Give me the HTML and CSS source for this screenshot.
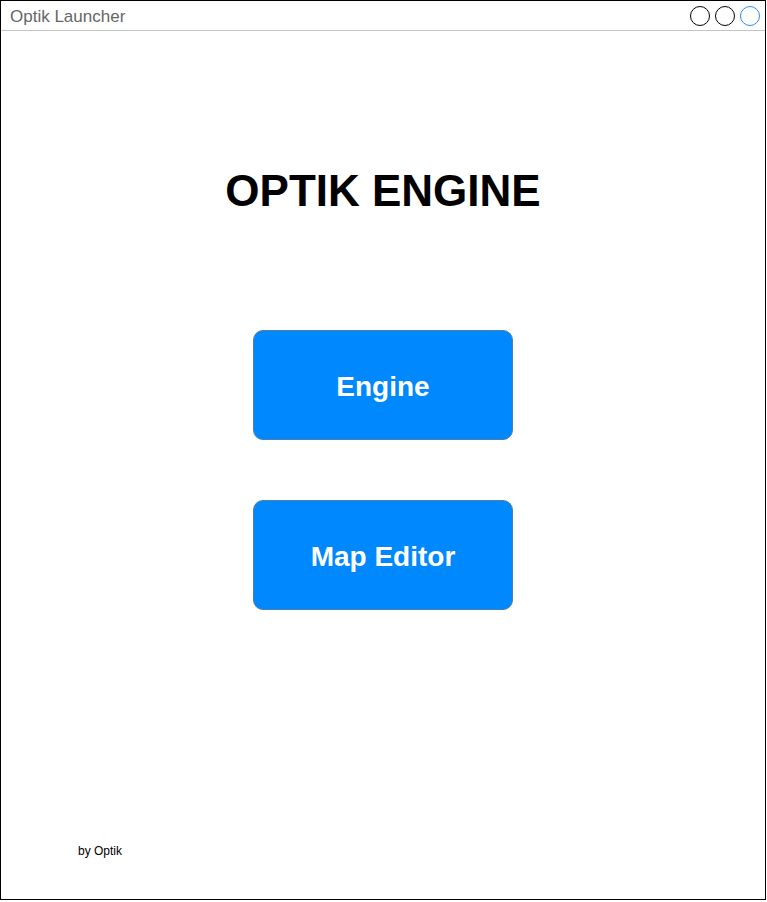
FILE: index.html
```
<!DOCTYPE html>
<html>
<head>
<meta charset="utf-8">
<title>Optik Launcher</title>
<link rel="stylesheet" href="styles.css">
</head>
<body>
<div class="window">
  <div class="titlebar">
    <span class="title">Optik Launcher</span>
    <div class="controls">
      <span class="dot"></span>
      <span class="dot"></span>
      <span class="dot dot-blue"></span>
    </div>
  </div>
  <main class="content">
    <h1 class="heading">OPTIK ENGINE</h1>
    <div class="buttons">
      <button class="launch">Engine</button>
      <button class="launch">Map Editor</button>
    </div>
  </main>
  <footer class="footer">by Optik</footer>
</div>
</body>
</html>
```
FILE: styles.css
```
html, body {
  margin: 0;
  padding: 0;
  background: #ffffff;
}

body {
  font-family: "Liberation Sans", Arial, sans-serif;
}

.window {
  box-sizing: border-box;
  width: 766px;
  height: 900px;
  border: 1px solid #000000;
  display: flex;
  flex-direction: column;
}

.titlebar {
  height: 29px;
  border-bottom: 1px solid #c4c4c4;
  display: flex;
  align-items: center;
  justify-content: space-between;
  padding: 0 5px 0 9px;
}

.title {
  font-size: 17px;
  line-height: 29px;
  color: #666666;
  padding-top: 1px;
}

.controls {
  display: flex;
  gap: 5px;
  padding-top: 1px;
}

.dot {
  box-sizing: border-box;
  width: 20px;
  height: 20px;
  border: 1px solid #000000;
  border-radius: 50%;
}

.dot-blue {
  border-color: #2f8fe8;
}

.content {
  flex: 1;
  display: flex;
  flex-direction: column;
  align-items: center;
}

.heading {
  margin: 135px 0 0 0;
  font-size: 44px;
  line-height: 50px;
  font-weight: bold;
  color: #000000;
}

.buttons {
  margin-top: 114px;
  display: flex;
  flex-direction: column;
  gap: 60px;
}

.launch {
  box-sizing: border-box;
  width: 260px;
  height: 110px;
  border: 1px solid #4c7fb0;
  border-radius: 10px;
  background: #0088ff;
  color: #ffffff;
  font-family: "Liberation Sans", Arial, sans-serif;
  font-size: 28px;
  font-weight: bold;
  padding: 3px 0 0 0;
  cursor: pointer;
}

.footer {
  font-size: 12px;
  line-height: 14px;
  color: #000000;
  padding: 0 0 41px 77px;
}
```
